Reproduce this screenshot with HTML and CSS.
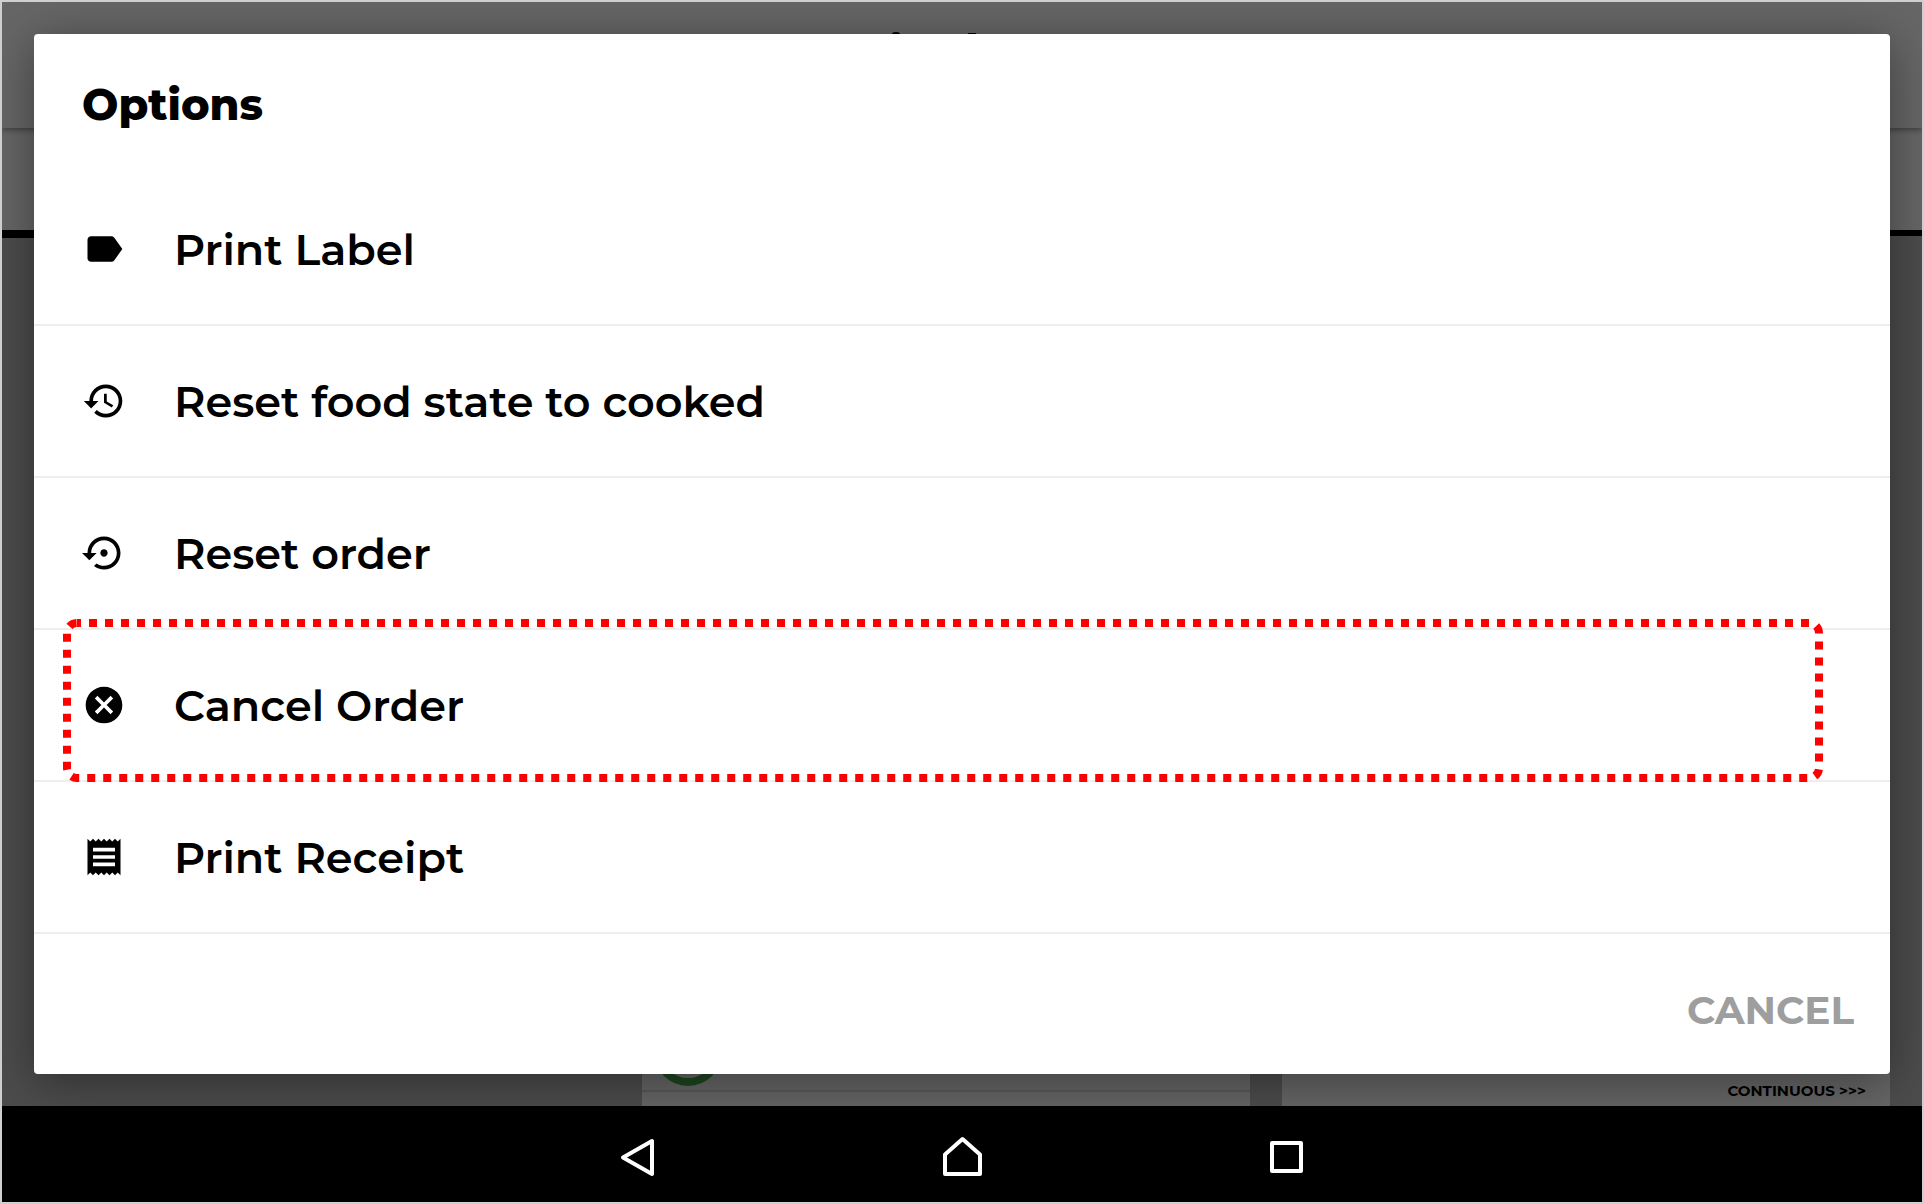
FILE: index.html
```html
<!DOCTYPE html>
<html lang="en">
<head>
<meta charset="utf-8">
<meta name="viewport" content="width=device-width, initial-scale=1">
<title>Options</title>
<link rel="stylesheet" href="styles.css">
</head>
<body>
<div class="device">
  <main class="screen">
    <div class="app">
      <header class="app-header">
        <svg class="header-mark" width="84" height="2" viewBox="0 0 84 2" aria-hidden="true"><path d="M0 2q0-2 4-2t4 2zM76 1h8v1h-8z"/></svg>
      </header>
      <div class="tabs"><span class="tab tab-active"></span><span class="tab"></span></div>
      <div class="board">
        <div class="column"></div>
        <div class="column card">
          <svg class="ring" width="68" height="68" viewBox="0 0 68 68" aria-hidden="true"><circle cx="34" cy="34" r="30"/></svg>
          <div class="card-line"></div>
        </div>
        <div class="column card"><p class="continuous">CONTINUOUS &gt;&gt;&gt;</p></div>
      </div>
    </div>
    <div class="scrim">
      <section class="dialog" role="dialog" aria-labelledby="dialog-title">
        <h1 class="dialog-title" id="dialog-title">Options</h1>
        <ul class="options">
          <li class="option"><button class="option-button" type="button">
            <svg class="icon" viewBox="0 0 24 24" aria-hidden="true"><path d="M17.63 5.84C17.27 5.33 16.67 5 16 5L5 5.01C3.9 5.01 3 5.9 3 7v10c0 1.1.9 1.99 2 1.99L16 19c.67 0 1.27-.33 1.63-.84L22 12l-4.37-6.16z"/></svg>
            <span>Print Label</span></button></li>
          <li class="option"><button class="option-button" type="button">
            <svg class="icon" viewBox="0 0 24 24" aria-hidden="true"><path d="M13 3c-4.97 0-9 4.03-9 9H1l3.89 3.89.07.14L9 12H6c0-3.87 3.13-7 7-7s7 3.13 7 7-3.13 7-7 7c-1.93 0-3.68-.79-4.94-2.06l-1.42 1.42C8.27 19.99 10.51 21 13 21c4.97 0 9-4.03 9-9s-4.03-9-9-9zm-1 5v5l4.28 2.54.72-1.21-3.5-2.08V8H12z"/></svg>
            <span>Reset food state to cooked</span></button></li>
          <li class="option"><button class="option-button" type="button">
            <svg class="icon" viewBox="0 0 24 24" aria-hidden="true"><path d="M14 12c0-1.1-.9-2-2-2s-2 .9-2 2 .9 2 2 2 2-.9 2-2zm-2-9c-4.97 0-9 4.03-9 9H0l4 4 4-4H5c0-3.87 3.13-7 7-7s7 3.13 7 7-3.13 7-7 7c-1.51 0-2.91-.49-4.06-1.3l-1.42 1.44C8.04 20.3 9.94 21 12 21c4.97 0 9-4.03 9-9s-4.03-9-9-9z"/></svg>
            <span>Reset order</span></button></li>
          <li class="option"><button class="option-button" type="button">
            <svg class="icon" viewBox="0 0 24 24" aria-hidden="true"><path d="M12 2C6.47 2 2 6.47 2 12s4.47 10 10 10 10-4.47 10-10S17.53 2 12 2zm5 13.59L15.59 17 12 13.41 8.41 17 7 15.59 10.59 12 7 8.41 8.41 7 12 10.59 15.59 7 17 8.41 13.41 12 17 15.59z"/></svg>
            <span>Cancel Order</span></button>
            <svg class="highlight" aria-hidden="true"><rect class="highlight-line" x="4" y="4" rx="10"/></svg></li>
          <li class="option"><button class="option-button" type="button">
            <svg class="icon" viewBox="0 0 24 24" aria-hidden="true"><path d="M18 17H6v-2h12v2zm0-4H6v-2h12v2zm0-4H6V7h12v2zM3 22l1.5-1.5L6 22l1.5-1.5L9 22l1.5-1.5L12 22l1.5-1.5L15 22l1.5-1.5L18 22l1.5-1.5L21 22V2l-1.5 1.5L18 2l-1.5 1.5L15 2l-1.5 1.5L12 2l-1.5 1.5L9 2 7.5 3.5 6 2 4.5 3.5 3 2v20z"/></svg>
            <span>Print Receipt</span></button></li>
        </ul>
        <footer class="dialog-footer"><button class="cancel" type="button">CANCEL</button></footer>
      </section>
    </div>
  </main>
  <nav class="navbar" aria-label="System">
    <button class="nav-button" type="button" aria-label="Back"><svg width="44" height="44" viewBox="0 0 44 44"><path d="M36 5v33L7 21.500z"/></svg></button>
    <button class="nav-button" type="button" aria-label="Home"><svg width="44" height="44" viewBox="0 0 44 44"><path d="M22.500 3L40 18.500V38H5V18.500z"/></svg></button>
    <button class="nav-button" type="button" aria-label="Recent apps"><svg width="44" height="44" viewBox="0 0 44 44"><path d="M8 7h29v28H8z"/></svg></button>
  </nav>
</div>
</body>
</html>
```
FILE: styles.css
```css
* {
  box-sizing: border-box;
}

body {
  margin: 0;
  font-family: Montserrat, Inter, "Liberation Sans", sans-serif;
  color: #000;
}

button {
  margin: 0;
  padding: 0;
  border: 0;
  background: none;
  color: inherit;
  font: inherit;
  cursor: pointer;
}

.device {
  display: flex;
  flex-direction: column;
  min-height: 100vh;
  border: 2px solid #cfcfcf;
}

/* The app and its scrim share one grid cell, so the dialog covers the app. */
.screen {
  flex: 1;
  display: grid;
  overflow: hidden;
}

.app,
.scrim {
  grid-area: 1 / 1;
  min-width: 0;
}

.app {
  display: flex;
  flex-direction: column;
  background: #bdbdbd;
}

.app-header {
  z-index: 1;
  display: flex;
  justify-content: center;
  height: 126px;
  padding: 30px 56px 0 0;
  background: #fff;
  box-shadow: 0 2px 6px rgba(0, 0, 0, 0.4);
}

.tabs {
  display: flex;
  height: 108px;
  background: #fff;
}

.tab {
  flex: 1;
  border-bottom: 6px solid #000;
}

.tab-active {
  height: 110px;
  border-bottom-width: 8px;
}

.board {
  flex: 1;
  display: grid;
  grid-template-columns: repeat(3, 1fr);
  gap: 32px;
  padding-right: 32px;
}

.column {
  display: flex;
  flex-direction: column;
  justify-content: flex-end;
}

.card {
  background: #fff;
}

.ring {
  margin-left: 12px;
  fill: none;
  stroke: #4caf50;
  stroke-width: 8px;
}

.card-line {
  height: 16px;
  margin-top: 4px;
  border-top: 2px solid #e0e0e0;
}

.continuous {
  margin: 0;
  padding: 0 24px 4px;
  font-size: 15px;
  line-height: 22px;
  font-weight: 700;
  text-align: right;
}

.scrim {
  z-index: 2;
  display: flex;
  padding: 32px;
  background: rgba(0, 0, 0, 0.6);
}

.dialog {
  flex: 1;
  display: flex;
  flex-direction: column;
  min-width: 0;
  border-radius: 4px;
  background: #fff;
  box-shadow: 0 8px 48px rgba(0, 0, 0, 0.4);
}

.dialog-title {
  margin: 0;
  padding: 44px 48px 43px;
  font-size: 43px;
  line-height: 53px;
  font-weight: 800;
}

.options {
  margin: 0;
  padding: 0;
  list-style: none;
}

.option {
  position: relative;
  border-bottom: 2px solid #eee;
}

.option-button {
  display: flex;
  align-items: center;
  gap: 48px;
  width: 100%;
  height: 150px;
  padding: 0 48px;
  font-size: 43px;
  line-height: 53px;
  font-weight: 600;
  text-align: left;
}

.icon {
  flex: none;
  width: 44px;
  height: 44px;
}

.highlight {
  position: absolute;
  top: -11px;
  left: 29px;
  width: calc(100% - 96px);
  height: 163px;
  pointer-events: none;
}

.highlight-line {
  width: calc(100% - 8px);
  height: 155px;
  fill: none;
  stroke: #f00;
  stroke-width: 8px;
  stroke-dasharray: 8 8;
  stroke-dashoffset: 4px;
}

.dialog-footer {
  display: flex;
  flex: 1;
  align-items: center;
  justify-content: flex-end;
  padding: 12px 36px 0;
}

.cancel {
  color: #9e9e9e;
  font-size: 39px;
  line-height: 48px;
  font-weight: 700;
}

.navbar {
  display: flex;
  justify-content: center;
  gap: 280px;
  height: 96px;
  padding-top: 8px;
  background: #000;
}

.nav-button {
  display: flex;
  align-items: center;
}

.nav-button path {
  fill: none;
  stroke: #fff;
  stroke-width: 4px;
  stroke-linejoin: round;
}
```
